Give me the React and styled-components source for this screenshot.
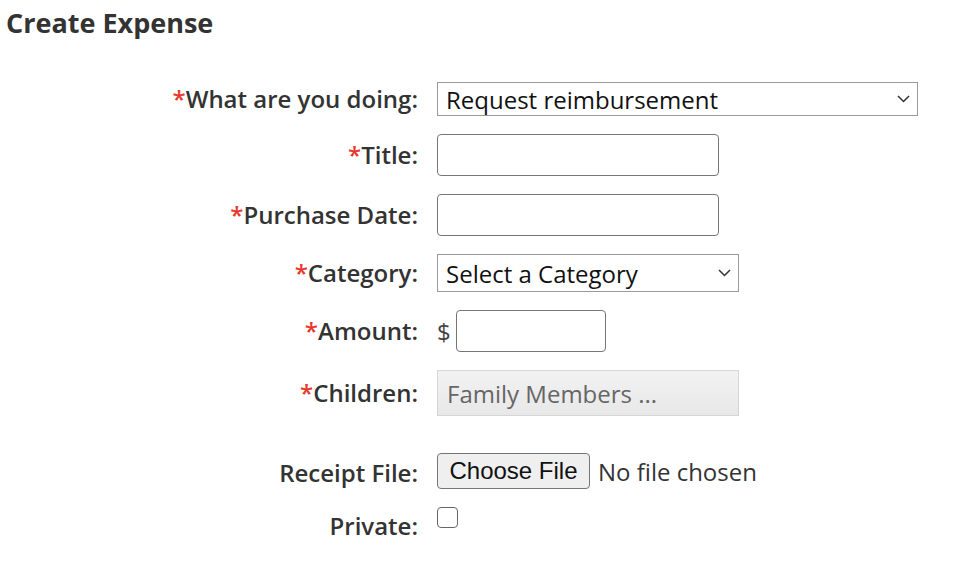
import styled, { createGlobalStyle } from "styled-components";

const GlobalStyle = createGlobalStyle`
  body {
    margin: 0;
    background: #fff;
    font-family: "Open Sans", "Noto Sans", sans-serif;
    color: #333;
  }
`;

function Chevron() {
  return (
    <svg width="13" height="8" viewBox="0 0 13 8" fill="none">
      <path d="M1 1l5.5 5.5L12 1" stroke="#333" strokeWidth="1.5" />
    </svg>
  );
}

export default function App() {
  return (
    <>
      <GlobalStyle />
      <Page>
        <Heading>Create Expense</Heading>
        <Form>
          <Row>
            <Label required>What are you doing:</Label>
            <SelectWrap width={481}>
              <Select defaultValue="reimb">
                <option value="reimb">Request reimbursement</option>
              </Select>
              <Arrow>
                <Chevron />
              </Arrow>
            </SelectWrap>
          </Row>
          <Row>
            <Label required>Title:</Label>
            <TextInput width={282} />
          </Row>
          <Row>
            <Label required>Purchase Date:</Label>
            <TextInput width={282} />
          </Row>
          <Row>
            <Label required>Category:</Label>
            <SelectWrap width={302} height={38}>
              <Select defaultValue="">
                <option value="">Select a Category</option>
              </Select>
              <Arrow>
                <Chevron />
              </Arrow>
            </SelectWrap>
          </Row>
          <Row>
            <Label required>Amount:</Label>
            <Control>
              <Dollar>$</Dollar>
              <TextInput width={150} />
            </Control>
          </Row>
          <Row spaced>
            <Label required>Children:</Label>
            <FamilyBox>Family Members ...</FamilyBox>
          </Row>
          <Row>
            <Label low>Receipt File:</Label>
            <Control>
              <FileButton type="button">Choose File</FileButton>
              <NoFile>No file chosen</NoFile>
            </Control>
          </Row>
          <Row top>
            <Label low>Private:</Label>
            <Checkbox type="checkbox" />
          </Row>
        </Form>
      </Page>
    </>
  );
}

const Page = styled.div`
  padding: 5px 0 0 6px;
`;

const Heading = styled.h1`
  margin: 0 0 42px;
  font-size: 27px;
  line-height: 35px;
  font-weight: 700;
  color: #333;
`;

const Form = styled.div`
  display: flex;
  flex-direction: column;
  gap: 18px;
`;

const Row = styled.div`
  display: grid;
  grid-template-columns: 412px 1fr;
  column-gap: 19px;
  align-items: ${(p) => (p.top ? "start" : "center")};
  margin-bottom: ${(p) => (p.spaced ? "19px" : "0")};
`;

const Label = styled.label`
  text-align: right;
  font-size: 24px;
  line-height: 32px;
  font-weight: 600;
  color: #333;
  padding-top: ${(p) => (p.low ? "3px" : "0")};

  &::before {
    content: ${(p) => (p.required ? '"*"' : '""')};
    color: #e8372c;
  }
`;

const Control = styled.div`
  display: flex;
  align-items: center;
`;

const SelectWrap = styled.div`
  position: relative;
  width: ${(p) => p.width}px;
  height: ${(p) => p.height || 34}px;
`;

const Select = styled.select`
  appearance: none;
  width: 100%;
  height: 100%;
  box-sizing: border-box;
  border: 1px solid #9a9a9a;
  border-radius: 0;
  background: #fff;
  padding: 0 30px 0 8px;
  font-family: "Open Sans", "Noto Sans", sans-serif;
  font-size: 24px;
  color: #111;
  outline: none;
`;

const Arrow = styled.span`
  position: absolute;
  right: 8px;
  top: 50%;
  transform: translateY(-50%);
  display: flex;
  pointer-events: none;
`;

const TextInput = styled.input`
  width: ${(p) => p.width}px;
  height: 42px;
  box-sizing: border-box;
  border: 1px solid #767676;
  border-radius: 4px;
  padding: 0 8px;
  font-family: "Open Sans", "Noto Sans", sans-serif;
  font-size: 24px;
  outline: none;
`;

const Dollar = styled.span`
  font-size: 24px;
  color: #444;
  width: 19px;
`;

const FamilyBox = styled.div`
  width: 302px;
  height: 46px;
  box-sizing: border-box;
  border: 1px solid #d6d6d6;
  background: linear-gradient(#f2f2f2, #e8e8e8);
  display: flex;
  align-items: center;
  padding-left: 9px;
  font-size: 24px;
  color: #666;
`;

const FileButton = styled.button`
  width: 153px;
  height: 36px;
  box-sizing: border-box;
  padding: 0;
  border: 1px solid #767676;
  border-radius: 4px;
  background: #efefef;
  font-family: "Liberation Sans", Arial, sans-serif;
  font-size: 24px;
  color: #111;
`;

const NoFile = styled.span`
  margin-left: 8px;
  font-size: 24px;
  color: #333;
`;

const Checkbox = styled.input`
  appearance: none;
  margin: 0;
  width: 21px;
  height: 21px;
  box-sizing: border-box;
  border: 1.5px solid #666;
  border-radius: 4px;
  background: #fff;
`;
